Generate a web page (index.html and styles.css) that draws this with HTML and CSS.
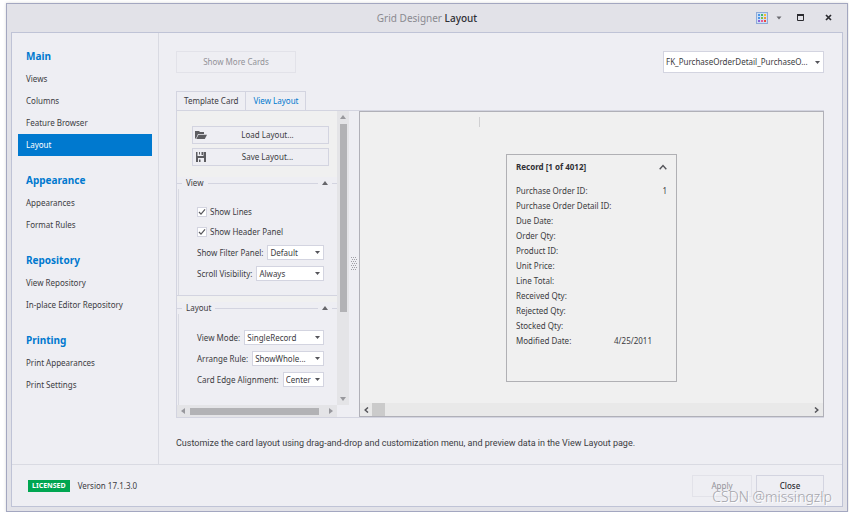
FILE: index.html
```html
<!DOCTYPE html>
<html lang="en">
<head>
    <meta charset="UTF-8">
    <meta name="viewport" content="width=device-width, initial-scale=1.0">
    <title>Grid Designer</title>
    <link rel="stylesheet" href="styles.css">
</head>
<body>
    <div class="window">
        <header class="titlebar">
            <h1>Grid Designer <strong>Layout</strong></h1>
            <div class="window-buttons">
                <button class="skin" aria-label="Skins">
                    <svg width="12" height="12" viewBox="0 0 12 12">
                        <rect x="0.5" y="0.5" width="11" height="11" fill="#cfdff5" stroke="#8fabd8"/>
                        <path d="M2 2h2v2H2zM2 5h2v2H2z" fill="#4b96e8"/>
                        <path d="M2 8h2v2H2z" fill="#8a63d8"/>
                        <path d="M5 2h2v2H5z" fill="#45b96b"/>
                        <path d="M5 5h2v2H5z" fill="#7cc142"/>
                        <path d="M5 8h2v2H5z" fill="#e85b9c"/>
                        <path d="M8 2h2v2H8z" fill="#f5c02c"/>
                        <path d="M8 5h2v2H8z" fill="#f59a2c"/>
                        <path d="M8 8h2v2H8z" fill="#ec4b3c"/>
                    </svg>
                </button>
                <button class="skin-menu" aria-label="Skin menu">
                    <svg width="6" height="4" viewBox="0 0 6 4"><path d="M0.5 0.5h5L3 3.5z" fill="#6a6a70"/></svg>
                </button>
                <button class="maximize" aria-label="Maximize">
                    <svg width="8" height="8" viewBox="0 0 8 8"><path d="M0.5 1v5.5h6V1" fill="none" stroke="#2b2b30"/><path d="M0 0h7v2H0z" fill="#2b2b30"/></svg>
                </button>
                <button class="close" aria-label="Close window">
                    <svg width="8" height="8" viewBox="0 0 8 8"><path d="M1 1l5 5M6 1L1 6" stroke="#2b2b30" stroke-width="1.7"/></svg>
                </button>
            </div>
        </header>

        <div class="designer">
            <div class="main">
                <nav class="sidebar">
                    <h2>Main</h2>
                    <a href="#">Views</a>
                    <a href="#">Columns</a>
                    <a href="#">Feature Browser</a>
                    <a href="#" class="active">Layout</a>
                    <h2>Appearance</h2>
                    <a href="#">Appearances</a>
                    <a href="#">Format Rules</a>
                    <h2>Repository</h2>
                    <a href="#">View Repository</a>
                    <a href="#">In-place Editor Repository</a>
                    <h2>Printing</h2>
                    <a href="#">Print Appearances</a>
                    <a href="#">Print Settings</a>
                </nav>

                <main class="content">
                    <div class="toolbar">
                        <button class="btn more-cards" disabled>Show More Cards</button>
                        <select class="view-select" aria-label="View">
                            <option>FK_PurchaseOrderDetail_PurchaseO...</option>
                        </select>
                    </div>

                    <div class="tabs" role="tablist">
                        <button class="tab" role="tab">Template Card</button>
                        <button class="tab selected" role="tab" aria-selected="true">View Layout</button>
                    </div>

                    <div class="tab-page">
                        <div class="options">
                            <div class="options-body">
                                <div class="layout-buttons">
                                    <button class="btn">
                                        <svg width="12" height="10" viewBox="0 0 12 10"><path d="M0 1h4l1 1h4v2H3L1 8.500H0z" fill="#5c5c60"/><path d="M3.500 4.700H12L9.800 9H1.300z" fill="#5c5c60"/></svg>
                                        <span>Load Layout...</span>
                                    </button>
                                    <button class="btn">
                                        <svg width="12" height="10" viewBox="0 0 12 10"><path d="M1 0h1.500v4h6V0H11v10H1z M3 6v4h6V6z" fill="#5c5c60" fill-rule="evenodd"/><path d="M4 0h1v2.500H4zM6.500 0H8v3H6.500zM4 7.500h1.500V10H4z" fill="#5c5c60"/></svg>
                                        <span>Save Layout...</span>
                                    </button>
                                </div>

                                <section class="group">
                                    <div class="group-header">
                                        <h3>View</h3>
                                        <button class="collapse" aria-label="Collapse View"><svg width="6" height="4" viewBox="0 0 6 4"><path d="M0 4h6L3 0z" fill="#66666b"/></svg></button>
                                    </div>
                                    <div class="fields">
                                        <label class="check"><input type="checkbox" checked>Show Lines</label>
                                        <label class="check"><input type="checkbox" checked>Show Header Panel</label>
                                        <div class="field">
                                            <label for="filter-panel">Show Filter Panel:</label>
                                            <select id="filter-panel"><option>Default</option></select>
                                        </div>
                                        <div class="field">
                                            <label for="scroll-visibility">Scroll Visibility:</label>
                                            <select id="scroll-visibility"><option>Always</option></select>
                                        </div>
                                    </div>
                                </section>

                                <section class="group last">
                                    <div class="group-header">
                                        <h3>Layout</h3>
                                        <button class="collapse" aria-label="Collapse Layout"><svg width="6" height="4" viewBox="0 0 6 4"><path d="M0 4h6L3 0z" fill="#66666b"/></svg></button>
                                    </div>
                                    <div class="fields">
                                        <div class="field">
                                            <label for="view-mode">View Mode:</label>
                                            <select id="view-mode"><option>SingleRecord</option></select>
                                        </div>
                                        <div class="field">
                                            <label for="arrange-rule">Arrange Rule:</label>
                                            <select id="arrange-rule"><option>ShowWhole...</option></select>
                                        </div>
                                        <div class="field">
                                            <label for="card-edge">Card Edge Alignment:</label>
                                            <select id="card-edge"><option>Center</option></select>
                                        </div>
                                    </div>
                                </section>
                            </div>
                            <div class="vscroll">
                                <svg width="6" height="4" viewBox="0 0 6 4"><path d="M0 4h6L3 0z" fill="#98989d"/></svg>
                                <div class="track"><div class="thumb"></div></div>
                                <svg width="6" height="4" viewBox="0 0 6 4"><path d="M0 0h6L3 4z" fill="#98989d"/></svg>
                            </div>
                            <div class="hscroll">
                                <svg width="4" height="6" viewBox="0 0 4 6"><path d="M4 0v6L0 3z" fill="#98989d"/></svg>
                                <div class="thumb"></div>
                                <svg width="4" height="6" viewBox="0 0 4 6"><path d="M0 0v6l4-3z" fill="#98989d"/></svg>
                            </div>
                        </div>

                        <div class="splitter">
                            <svg width="6" height="14" viewBox="0 0 6 14">
                                <path d="M0 0h1v1H0zM2 0h1v1H2zM4 0h1v1H4zM1 2h1v1H1zM3 2h1v1H3zM5 2h1v1H5zM0 4h1v1H0zM2 4h1v1H2zM4 4h1v1H4zM1 6h1v1H1zM3 6h1v1H3zM5 6h1v1H5zM0 8h1v1H0zM2 8h1v1H2zM4 8h1v1H4zM1 10h1v1H1zM3 10h1v1H3zM5 10h1v1H5zM0 12h1v1H0zM2 12h1v1H2zM4 12h1v1H4z" fill="#a0a0a6"/>
                            </svg>
                        </div>

                        <div class="preview">
                            <div class="caret"></div>
                            <article class="card">
                                <div class="card-header">
                                    <h3>Record [1 of 4012]</h3>
                                    <button class="collapse" aria-label="Collapse record"><svg width="8" height="6" viewBox="0 0 8 6"><path d="M0.700 5.200L4 1.500l3.300 3.700" fill="none" stroke="#55555a" stroke-width="1.400"/></svg></button>
                                </div>
                                <table>
                                    <tr><th>Purchase Order ID:</th><td class="number">1</td></tr>
                                    <tr><th>Purchase Order Detail ID:</th><td></td></tr>
                                    <tr><th>Due Date:</th><td></td></tr>
                                    <tr><th>Order Qty:</th><td></td></tr>
                                    <tr><th>Product ID:</th><td></td></tr>
                                    <tr><th>Unit Price:</th><td></td></tr>
                                    <tr><th>Line Total:</th><td></td></tr>
                                    <tr><th>Received Qty:</th><td></td></tr>
                                    <tr><th>Rejected Qty:</th><td></td></tr>
                                    <tr><th>Stocked Qty:</th><td></td></tr>
                                    <tr><th>Modified Date:</th><td>4/25/2011</td></tr>
                                </table>
                            </article>
                            <div class="preview-scroll">
                                <svg width="5" height="6" viewBox="0 0 5 6"><path d="M4 0.500L1.200 3 4 5.500" fill="none" stroke="#55555a" stroke-width="1.500"/></svg>
                                <div class="thumb"></div>
                                <svg width="5" height="6" viewBox="0 0 5 6"><path d="M1 0.500L3.800 3 1 5.500" fill="none" stroke="#55555a" stroke-width="1.500"/></svg>
                            </div>
                        </div>
                    </div>

                    <p class="hint">Customize the card layout using drag-and-drop and customization menu, and preview data in the View Layout page.</p>
                </main>
            </div>

            <footer class="footer">
                <span class="badge">LICENSED</span>
                <span class="version">Version 17.1.3.0</span>
                <button class="btn apply" disabled>Apply</button>
                <button class="btn close-btn">Close</button>
            </footer>
        </div>
        <div class="watermark">CSDN @missingzlp</div>
    </div>
</body>
</html>
```
FILE: styles.css
```css
* {
    box-sizing: border-box;
}

body {
    margin: 0;
    padding: 3px 1px 0 6px;
    min-height: 100vh;
    display: flex;
    background-color: #fff;
    color: #3c3c42;
    font-family: "Noto Sans", sans-serif;
    font-size: 8px;
    line-height: 12px;
}

h1, h2, h3, p {
    margin: 0;
}

button, select, input {
    font: inherit;
    color: inherit;
    margin: 0;
    padding: 0;
}

button {
    border: none;
    background: none;
    cursor: pointer;
}

svg {
    display: block;
}

.window {
    position: relative;
    flex: 1;
    min-width: 0;
    display: flex;
    flex-direction: column;
    padding: 0 4px 4px;
    border: 1px solid #a3a7c0;
    background-color: #e2e2e8;
    box-shadow: 0 0 3px rgba(0, 0, 0, 0.15);
}

.titlebar {
    display: grid;
    grid-template-columns: 1fr auto 1fr;
    align-items: center;
    height: 28px;
}

.titlebar h1 {
    grid-column: 2;
    font-size: 10px;
    font-weight: 400;
    color: #8a8a90;
}

.titlebar strong {
    font-weight: 500;
    color: #2f2f35;
}

.window-buttons {
    display: flex;
    justify-content: flex-end;
    align-items: center;
    padding-right: 10px;
}

.skin-menu {
    margin-left: 8px;
}

.maximize {
    margin-left: 15px;
}

.close {
    margin-left: 20px;
}

.designer {
    flex: 1;
    display: flex;
    flex-direction: column;
    border: 1px solid #bfc3d6;
    background-color: #eeeef3;
}

.main {
    flex: 1;
    display: flex;
}

/* Navigation */
.sidebar {
    width: 147px;
    padding: 12px 6px;
    border-right: 1px solid #d9dae2;
}

.sidebar h2 {
    margin-top: 13px;
    padding-left: 8px;
    font-size: 10px;
    line-height: 23px;
    color: #0079cf;
}

.sidebar h2:first-child {
    margin-top: 0;
}

.sidebar a {
    display: block;
    padding-left: 8px;
    line-height: 22px;
    color: inherit;
    text-decoration: none;
}

.sidebar a.active {
    background-color: #0079cf;
    color: #fff;
}

/* Content */
.content {
    flex: 1;
    min-width: 0;
    display: flex;
    flex-direction: column;
    padding: 18px 18px 15px 17px;
}

.toolbar {
    display: flex;
    justify-content: space-between;
}

.btn {
    height: 22px;
    border: 1px solid #d3d4e0;
    background-color: #eeeef3;
}

.btn:disabled {
    border-color: #e2e2e9;
    color: #929298;
}

.more-cards {
    width: 120px;
}

select {
    appearance: none;
    height: 15px;
    padding: 0 12px 0 2px;
    border: 1px solid #d3d4e0;
    border-radius: 0;
    background: #fff url("data:image/svg+xml,%3Csvg xmlns='http://www.w3.org/2000/svg' width='5' height='3'%3E%3Cpath d='M0 0h5L2.5 3z' fill='%2355555a'/%3E%3C/svg%3E") no-repeat right 3px center;
}

.view-select {
    width: 161px;
    height: 22px;
}

.tabs {
    display: flex;
    margin-top: 18px;
}

.tab {
    height: 19px;
    padding: 0 7px;
    border: 1px solid #d3d4e0;
    border-bottom: none;
}

.tab.selected {
    border-left: none;
    color: #0079cf;
}

.tab-page {
    flex: 1;
    display: flex;
    border: 1px solid #d3d4e0;
    border-right: none;
}

.options {
    width: 172px;
    display: grid;
    grid-template-columns: 1fr 12px;
    grid-template-rows: 1fr 12px;
}

.options-body {
    display: flex;
    flex-direction: column;
    background-color: #f0f0f0;
}

.layout-buttons {
    display: flex;
    flex-direction: column;
    gap: 4px;
    padding: 15px 8px 11px 15px;
}

.layout-buttons .btn {
    display: flex;
    align-items: center;
    height: 18px;
    padding-left: 2px;
}

.layout-buttons span {
    flex: 1;
}

.group {
    margin-bottom: 6px;
    border-bottom: 1px solid #d3d4e0;
    background-color: #eeeef3;
}

.group.last {
    flex: 1;
    display: flex;
    flex-direction: column;
    margin-bottom: 0;
    border-bottom: none;
}

.group-header {
    display: flex;
    align-items: center;
    gap: 4px;
}

.group-header::before,
.group-header::after {
    content: "";
    width: 5px;
    border-top: 1px solid #d3d4e0;
}

.group-header h3 {
    flex: 1;
    display: flex;
    align-items: center;
    gap: 4px;
    font-size: 8px;
    font-weight: 400;
}

.group-header h3::after {
    content: "";
    flex: 1;
    border-top: 1px solid #d3d4e0;
}

.fields {
    flex: 1;
    display: flex;
    flex-direction: column;
    gap: 6px;
    margin-left: 1px;
    padding: 16px 13px 14px 18px;
    border-left: 1px solid #d9dae2;
}

.field {
    display: flex;
    align-items: center;
    gap: 4px;
}

.field select {
    flex: 1;
    min-width: 0;
}

.check {
    display: flex;
    align-items: center;
    gap: 3px;
    height: 14px;
}

.check input {
    appearance: none;
    width: 10px;
    height: 10px;
    border: 1px solid #d3d4e0;
    background-color: #fff;
}

.check input:checked {
    background-image: url("data:image/svg+xml,%3Csvg xmlns='http://www.w3.org/2000/svg' width='8' height='8'%3E%3Cpath d='M1 4l2 2.200L7 1.300' fill='none' stroke='%2355555a' stroke-width='1.200'/%3E%3C/svg%3E");
}

/* Scrollbars */
.vscroll {
    display: flex;
    flex-direction: column;
    align-items: center;
    padding: 4px 0;
    background-color: #e4e4e7;
}

.vscroll .track {
    flex: 1;
    padding: 5px 0;
}

.vscroll .thumb {
    width: 7px;
    height: 70%;
    background-color: #b2b2b5;
}

.hscroll {
    display: flex;
    align-items: center;
    padding: 0 4px;
    gap: 5px;
    background-color: #e4e4e7;
}

.hscroll .thumb {
    flex: 1;
    height: 7px;
    margin-right: 5px;
    background-color: #b2b2b5;
}

.splitter {
    width: 10px;
    display: flex;
    align-items: center;
    justify-content: center;
}

.preview {
    flex: 1;
    display: flex;
    flex-direction: column;
    border: 1px solid #b0b0b8;
    background-color: #f0f0f0;
}

.caret {
    width: 1px;
    height: 10px;
    margin: 5px 0 0 119px;
    background-color: #d0d0d2;
}

.card {
    width: 171px;
    min-height: 228px;
    margin: 27px auto 10px;
    padding: 6px 9px;
    border: 1px solid #b0b0b4;
}

.card-header {
    display: flex;
    align-items: center;
    justify-content: space-between;
    margin-bottom: 10px;
}

.card-header h3 {
    font-size: 8px;
    color: #2f2f35;
}

.card table {
    width: 100%;
    border-collapse: collapse;
    line-height: 15px;
}

.card th {
    width: 98px;
    padding: 0;
    font-weight: 400;
    text-align: left;
    white-space: nowrap;
}

.card td {
    height: 15px;
    padding: 0;
}

.card .number {
    text-align: right;
}

.preview-scroll {
    display: flex;
    align-items: center;
    gap: 3px;
    height: 13px;
    margin-top: auto;
    padding: 0 4px;
    background-color: #e9e9e9;
}

.preview-scroll .thumb {
    width: 13px;
    height: 13px;
    margin-right: auto;
    background-color: #cbcbcb;
}

.hint {
    margin-top: 19px;
    font-family: Roboto, sans-serif;
    font-size: 9px;
}

/* Footer */
.footer {
    display: flex;
    align-items: center;
    gap: 4px;
    height: 42px;
    padding: 0 18px 0 16px;
    border-top: 1px solid #d9dae2;
}

.badge {
    padding: 0 4px;
    background-color: #00a651;
    color: #fff;
    font-size: 7px;
    font-weight: 700;
}

.version {
    margin: 0 auto 0 4px;
}

.apply {
    width: 60px;
}

.close-btn {
    width: 68px;
    font-weight: 500;
    color: #2f2f35;
}

.watermark {
    position: absolute;
    right: 15px;
    bottom: 4px;
    font-size: 14px;
    font-weight: 300;
    line-height: 20px;
    color: #a5a5ab;
    text-shadow: 1px 1px 0 #fff;
    pointer-events: none;
}
```
